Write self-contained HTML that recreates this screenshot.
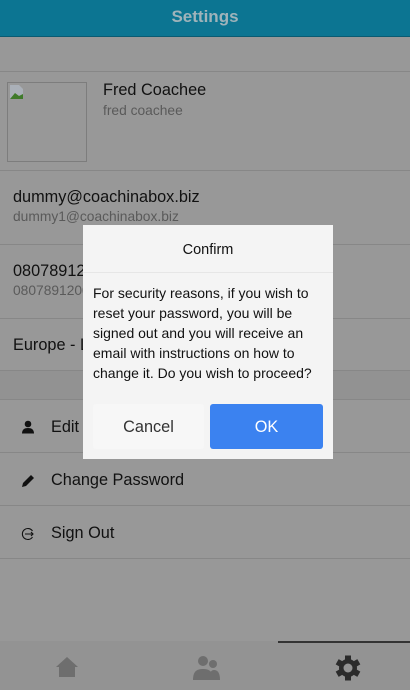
<!DOCTYPE html>
<html><head><style>
*{margin:0;padding:0;box-sizing:border-box}
body{width:410px;height:690px;overflow:hidden;background:#989898;font-family:"Liberation Sans",Arial,sans-serif;position:relative;color:#111}
.hdr{position:absolute;left:0;top:0;width:410px;height:37px;background:#0c7592;border-bottom:1px solid #0a5b72;color:#9fb3ba;font-size:17px;font-weight:bold;text-align:center;line-height:34px}
.ln{position:absolute;left:0;width:410px;height:1px;background:#878787}
.t{position:absolute;white-space:nowrap}
.big{font-size:16.3px;color:#111}
.sm{font-size:13.8px;color:#5a5a5a}
.dlg{position:absolute;left:83px;top:225px;width:250px;height:234px;background:#f4f4f4}
</style></head><body>
<div class="hdr">Settings</div>
<div class="ln" style="top:71px"></div>
<div style="position:absolute;left:7px;top:82px;width:80px;height:80px;border:1px solid #7d7d7d"></div>
<svg style="position:absolute;left:9px;top:84px" width="16" height="16"><path d="M1 1h9l4 4v10H1z" fill="#aab0b8"/><path d="M1 15l5-6 4 3 4-2v5z" fill="#3f7a2b"/></svg>
<div class="t big" style="left:103px;top:81px">Fred Coachee</div>
<div class="t sm" style="left:103px;top:103px">fred coachee</div>
<div class="ln" style="top:170px"></div>
<div class="t big" style="left:13px;top:188px">dummy@coachinabox.biz</div>
<div class="t sm" style="left:13px;top:209px">dummy1@coachinabox.biz</div>
<div class="ln" style="top:244px"></div>
<div class="t big" style="left:13px;top:262px">08078912345</div>
<div class="t sm" style="left:13px;top:283px">08078912000</div>
<div class="ln" style="top:318px"></div>
<div class="t big" style="left:13px;top:336px">Europe - London</div>
<div class="ln" style="top:370px"></div>
<div style="position:absolute;left:0;top:371px;width:410px;height:28px;background:#929292"></div>
<div class="ln" style="top:399px"></div>
<svg style="position:absolute;left:21px;top:420px" width="14" height="14"><circle cx="7" cy="4" r="3.3" fill="#111"/><path d="M1 13.5c0-4 2.5-5.5 6-5.5s6 1.5 6 5.5z" fill="#111"/></svg>
<div class="t big" style="left:51px;top:418px">Edit Profile</div>
<div class="ln" style="top:452px"></div>
<svg style="position:absolute;left:21px;top:474px" width="14" height="14"><path d="M1 13l1-4 8-8 3 3-8 8z" fill="#111"/></svg>
<div class="t big" style="left:51px;top:471px">Change Password</div>
<div class="ln" style="top:505px"></div>
<svg style="position:absolute;left:21px;top:527px" width="14" height="14"><path d="M11.5 4A5.5 5.5 0 1 0 11.5 10" fill="none" stroke="#111" stroke-width="1.1"/><path d="M4 7h8M10 5l2 2-2 2" fill="none" stroke="#111" stroke-width="1.1"/></svg>
<div class="t big" style="left:51px;top:524px">Sign Out</div>
<div class="ln" style="top:558px"></div>
<div style="position:absolute;left:0;top:641px;width:410px;height:49px;background:#939393"></div>
<div style="position:absolute;left:278px;top:641px;width:132px;height:2px;background:#333"></div>
<svg style="position:absolute;left:55px;top:655px" width="24" height="24"><path d="M12 2L1 12h3v10h16V12h3z" fill="#6e6e6e"/></svg>
<svg style="position:absolute;left:192px;top:654px" width="30" height="26"><circle cx="11" cy="7" r="5" fill="#6e6e6e"/><path d="M1 26c0-9 4-11 10-11s10 2 10 11z" fill="#6e6e6e"/><circle cx="21" cy="10" r="4" fill="#6e6e6e"/><path d="M17 26c0-7 2-10 5-10s6 2 6 10z" fill="#6e6e6e"/></svg>
<svg style="position:absolute;left:335px;top:655px" width="26" height="26" viewBox="0 0 26 26"><g fill="#2b2b2b" transform="translate(13 13)"><circle r="9"/><rect x="-3" y="-12.5" width="6" height="25"/><rect x="-3" y="-12.5" width="6" height="25" transform="rotate(60)"/><rect x="-3" y="-12.5" width="6" height="25" transform="rotate(120)"/></g><circle cx="13" cy="13" r="4.5" fill="#939393"/></svg>
<div class="dlg">
<div style="height:48px;text-align:center;font-size:14.5px;line-height:50px;color:#111;border-bottom:1px solid #e6e6e6">Confirm</div>
<div style="padding:10px 10px 0 10px;font-size:14px;line-height:20px;color:#111">For security reasons, if you wish to reset your password, you will be signed out and you will receive an email with instructions on how to change it. Do you wish to proceed?</div>
<div style="position:absolute;left:10px;top:179px;width:111px;height:45px;background:#f7f7f7;border-radius:3px;text-align:center;line-height:46px;font-size:16.3px;color:#333">Cancel</div>
<div style="position:absolute;left:127px;top:179px;width:113px;height:45px;background:#3b82f0;border-radius:3px;text-align:center;line-height:46px;font-size:16.3px;color:#fff">OK</div>
</div>
</body></html>
